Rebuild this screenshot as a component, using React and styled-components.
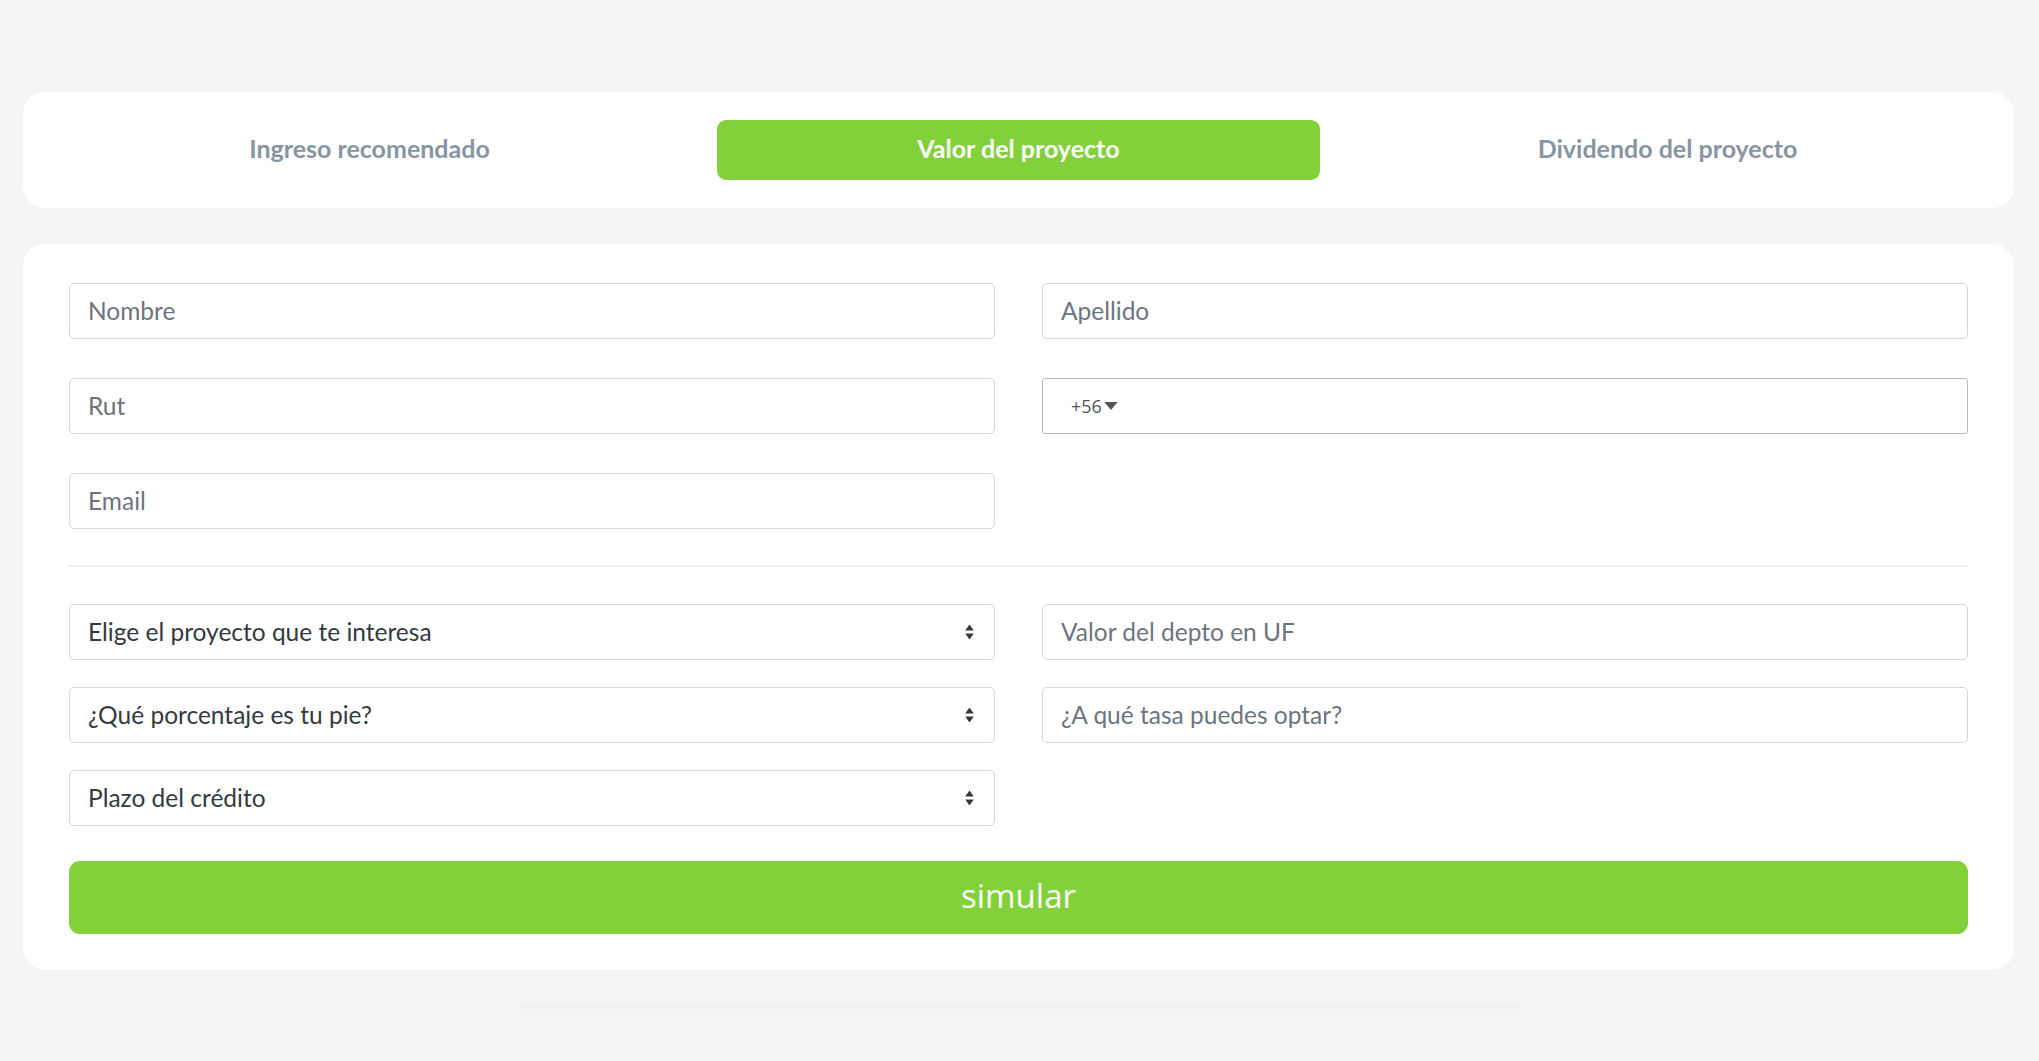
import React, { useState } from "react";
import styled, { createGlobalStyle } from "styled-components";

const GlobalStyle = createGlobalStyle`
  body {
    margin: 0;
    background: #f5f5f5;
    font-family: Lato, "Open Sans", sans-serif;
  }
  * { box-sizing: border-box; }
`;

const tabs = ["Ingreso recomendado", "Valor del proyecto", "Dividendo del proyecto"];

const App = () => {
  const [active, setActive] = useState(1);
  return (
    <Page>
      <GlobalStyle />
      <TabCard>
        {tabs.map((t, i) => (
          <TabCell key={t}>
            <Tab active={i === active} onClick={() => setActive(i)}>
              {t}
            </Tab>
          </TabCell>
        ))}
      </TabCard>

      <FormCard>
        <Grid>
          <Input placeholder="Nombre" />
          <Input placeholder="Apellido" />
          <Input placeholder="Rut" />
          <Phone>
            <Prefix>
              +56
              <Caret viewBox="0 0 10 6">
                <path d="M0 0h10L5 6z" fill="#555" />
              </Caret>
            </Prefix>
            <PhoneInput />
          </Phone>
          <Input placeholder="Email" />
        </Grid>

        <Divider />

        <Grid tight>
          <SelectBox>
            <Select defaultValue="">
              <option value="">Elige el proyecto que te interesa</option>
            </Select>
            <Arrows />
          </SelectBox>
          <Input placeholder="Valor del depto en UF" />
          <SelectBox>
            <Select defaultValue="">
              <option value="">¿Qué porcentaje es tu pie?</option>
            </Select>
            <Arrows />
          </SelectBox>
          <Input placeholder="¿A qué tasa puedes optar?" />
          <SelectBox>
            <Select defaultValue="">
              <option value="">Plazo del crédito</option>
            </Select>
            <Arrows />
          </SelectBox>
        </Grid>

        <Submit>simular</Submit>
      </FormCard>
      <Shadow />
    </Page>
  );
};

const Arrows = () => (
  <ArrowIcon viewBox="0 0 8 14">
    <path d="M4 0L8 5.5H0z M4 14L0 8.5h8z" fill="#343a40" />
  </ArrowIcon>
);

export default App;

const Page = styled.div`
  padding: 92px 25px 40px 23px;
  min-height: 1061px;
`;

const TabCard = styled.div`
  background: #fff;
  border-radius: 22px;
  height: 116px;
  padding: 0 22px;
  display: grid;
  grid-template-columns: repeat(3, 1fr);
  align-items: center;
`;

const TabCell = styled.div`
  padding: 0 23px;
`;

const Tab = styled.button`
  width: 100%;
  height: 60px;
  border: none;
  border-radius: 9px;
  padding: 0 0 4px;
  background: ${p => (p.active ? "#82d13b" : "transparent")};
  color: ${p => (p.active ? "#fff" : "#8795a3")};
  font-family: Lato, sans-serif;
  font-weight: 700;
  font-size: 25px;
  cursor: pointer;
`;

const FormCard = styled.div`
  margin-top: 36px;
  background: #fff;
  border-radius: 22px;
  padding: 39px 46px 36px;
`;

const Grid = styled.div`
  display: grid;
  grid-template-columns: 1fr 1fr;
  column-gap: 47px;
  row-gap: ${p => (p.tight ? "27px" : "39px")};
`;

const fieldBase = `
  width: 100%;
  height: 56px;
  border: 1px solid #d3d8dd;
  border-radius: 5px;
  background: #fff;
  font-family: Lato, "Open Sans", sans-serif;
  font-size: 24.5px;
  padding: 0 18px 2px;
  outline: none;
`;

const Input = styled.input`
  ${fieldBase}
  color: #495057;
  &::placeholder {
    color: #6c757d;
  }
`;

const Phone = styled.div`
  height: 56px;
  border: 1px solid #b9b9b9;
  border-radius: 3px;
  display: flex;
  align-items: center;
  padding-left: 28px;
`;

const Prefix = styled.span`
  display: flex;
  align-items: center;
  gap: 2px;
  color: #555;
  font-family: "Open Sans", sans-serif;
  font-size: 18px;
`;

const Caret = styled.svg`
  width: 14px;
  height: 8px;
`;

const PhoneInput = styled.input`
  flex: 1;
  border: none;
  outline: none;
  height: 100%;
  background: transparent;
`;

const Divider = styled.hr`
  border: none;
  border-top: 2px solid #eceef0;
  margin: 36px 0 37px;
`;

const SelectBox = styled.div`
  position: relative;
`;

const Select = styled.select`
  ${fieldBase}
  appearance: none;
  color: #343a40;
`;

const ArrowIcon = styled.svg`
  position: absolute;
  right: 21px;
  top: 50%;
  width: 9px;
  height: 15px;
  transform: translateY(-50%);
  pointer-events: none;
`;

const Submit = styled.button`
  margin-top: 35px;
  width: 100%;
  height: 73px;
  border: none;
  border-radius: 11px;
  background: #82d13b;
  color: #fff;
  font-family: "Open Sans", sans-serif;
  font-size: 33px;
  font-weight: 500;
  padding: 0 0 4px;
  cursor: pointer;
`;

const Shadow = styled.div`
  width: 1000px;
  height: 14px;
  margin: 32px auto 0;
  background: #f2f2f2;
  border-radius: 7px;
`;
